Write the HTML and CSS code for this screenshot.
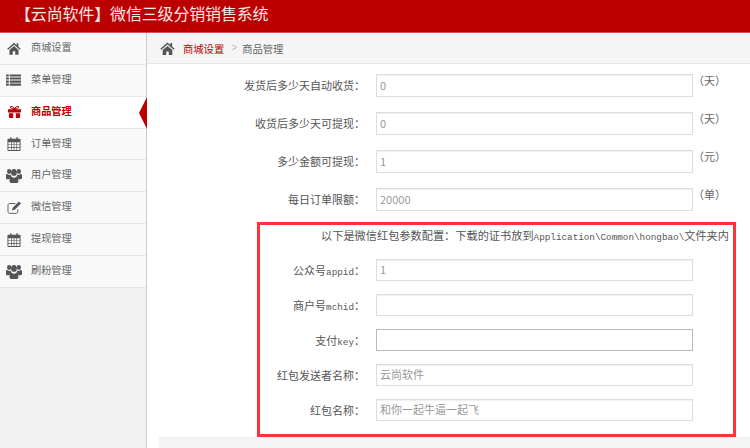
FILE: index.html
```html
<!DOCTYPE html>
<html lang="zh">
<head>
<meta charset="utf-8">
<title>云尚软件</title>
<link rel="stylesheet" href="styles.css">
</head>
<body>
<svg class="defs" width="0" height="0" aria-hidden="true">
  <symbol id="i-home" viewBox="0 0 16 14"><path d="M8 0.5 0.3 7.2l1 1.1L8 2.6l6.7 5.7 1-1.1L13 4.9V1h-2v2.2zM2.8 8.6V14h3.8v-3.8h2.8V14h3.8V8.6L8 4.2z"/></symbol>
  <symbol id="i-list" viewBox="0 0 16 12"><path d="M0 0h3v2.2H0zM4 0h12v2.2H4zM0 3.3h3v2.2H0zM4 3.3h12v2.2H4zM0 6.6h3v2.2H0zM4 6.6h12v2.2H4zM0 9.8h3V12H0zM4 9.8h12V12H4z"/></symbol>
  <symbol id="i-gift" viewBox="0 0 14 13"><path fill-rule="evenodd" d="M0 3.5h5.6V3C4 3 2 2.8 2 1.4 2 .4 3 0 3.8 0 5.2 0 6.3 1.2 7 2.4 7.7 1.2 8.8 0 10.2 0 11 0 12 .4 12 1.4 12 2.8 10 3 8.4 3v.5H14V7H0zM1 7.8h4.6V13H2a1 1 0 0 1-1-1zM8.4 7.8H13V12a1 1 0 0 1-1 1H8.4zM3.8 1.2c-.5 0-.7.2-.7.4 0 .5 1 .7 2.5.7-.5-.6-1.1-1.1-1.8-1.1zM10.2 1.2c-.7 0-1.3.5-1.8 1.1 1.500 0 2.500-.2 2.500-.7 0-.2-.2-.4-.7-.4z"/></symbol>
  <symbol id="i-cal" viewBox="0 0 14 15"><path fill-rule="evenodd" d="M1 2h2V.8C3 .3 3.300 0 3.700 0s.8.300.8.800V2h5V.8c0-.5.3-.8.7-.8s.8.300.8.800V2h2c.6 0 1 .4 1 1v11c0 .6-.4 1-1 1H1c-.6 0-1-.4-1-1V3c0-.6.4-1 1-1zM1 5.500v2.500h2.800V5.500zM4.500 5.500v2.500h2.200V5.500zM7.400 5.500v2.500h2.200V5.500zM10.300 5.500v2.500H13V5.500zM1 8.700v2.300h2.800V8.700zM4.500 8.700v2.300h2.200V8.700zM7.400 8.700v2.300h2.200V8.700zM10.300 8.700v2.300H13V8.700zM1 11.700v2.300h2.800v-2.300zM4.500 11.700v2.300h2.200v-2.300zM7.400 11.700v2.300h2.200v-2.300zM10.300 11.700v2.300H13v-2.300z"/></symbol>
  <symbol id="i-users" viewBox="0 0 16 13" preserveAspectRatio="none"><circle cx="3.100" cy="3" r="2.100"/><circle cx="12.900" cy="3" r="2.100"/><circle cx="8" cy="3.800" r="2.900"/><path d="M0 6.500c0-1 .8-1.300 1.500-1.300.8.800 2 1 3 .5.200.7.600 1.200 1.100 1.600C4.300 7.800 3.500 8.800 3.300 9.700H1c-.6 0-1-.4-1-1zM16 6.500c0-1-.8-1.300-1.500-1.300-.8.800-2 1-3 .5-.2.700-.6 1.200-1.100 1.600 1.300.5 2.100 1.500 2.300 2.400H15c.6 0 1-.4 1-1zM5.500 7.400c.7.700 1.600 1.100 2.500 1.100s1.800-.4 2.500-1.100c1.200.2 1.900 1.100 1.900 2.300v1.700c0 1-.8 1.600-1.800 1.600H5.400c-1 0-1.800-.6-1.800-1.600V9.700c0-1.200.7-2.100 1.900-2.300z"/></symbol>
  <symbol id="i-edit" viewBox="0 0 16 14"><path fill="none" stroke="currentColor" stroke-width="1" d="M11.500 9v2.500c0 1-.7 1.800-1.800 1.800H2.800c-1 0-1.800-.8-1.800-1.800v-7c0-1 .8-1.800 1.800-1.800H9"/><path d="M12.800.5 15 2.700 8.300 9.500l-3 .8.800-3z"/></symbol>
</svg>

<header class="topbar">【云尚软件】微信三级分销销售系统</header>

<div class="layout">
  <nav class="sidebar">
    <a class="nav-item"><svg class="nav-icon"><use href="#i-home"/></svg><span>商城设置</span></a>
    <a class="nav-item"><svg class="nav-icon list"><use href="#i-list"/></svg><span>菜单管理</span></a>
    <a class="nav-item active"><svg class="nav-icon gift"><use href="#i-gift"/></svg><span>商品管理</span></a>
    <a class="nav-item"><svg class="nav-icon cal"><use href="#i-cal"/></svg><span>订单管理</span></a>
    <a class="nav-item"><svg class="nav-icon users"><use href="#i-users"/></svg><span>用户管理</span></a>
    <a class="nav-item"><svg class="nav-icon edit"><use href="#i-edit"/></svg><span>微信管理</span></a>
    <a class="nav-item"><svg class="nav-icon cal"><use href="#i-cal"/></svg><span>提现管理</span></a>
    <a class="nav-item"><svg class="nav-icon users"><use href="#i-users"/></svg><span>刷粉管理</span></a>
  </nav>

  <main class="content">
    <div class="crumbs">
      <svg class="crumb-icon"><use href="#i-home"/></svg>
      <a class="crumb-link">商城设置</a>
      <span class="crumb-sep">&gt;</span>
      <span>商品管理</span>
    </div>

    <form class="form">
      <div class="row"><label>发货后多少天自动收货：</label><input value="0"><span class="unit">（天）</span></div>
      <div class="row"><label>收货后多少天可提现：</label><input value="0"><span class="unit">（天）</span></div>
      <div class="row"><label>多少金额可提现：</label><input value="1"><span class="unit">（元）</span></div>
      <div class="row"><label>每日订单限额：</label><input value="20000"><span class="unit">（单）</span></div>

      <section class="redpack">
        <p class="notice">以下是微信红包参数配置：下载的证书放到<span class="latin">Application\Common\hongbao\</span>文件夹内</p>
        <div class="row2"><label>公众号<span class="latin">appid</span>：</label><input value="1"></div>
        <div class="row2"><label>商户号<span class="latin">mchid</span>：</label><input value=""></div>
        <div class="row2"><label>支付<span class="latin">key</span>：</label><input class="focused" value=""></div>
        <div class="row2"><label>红包发送者名称：</label><input value="云尚软件"></div>
        <div class="row2"><label>红包名称：</label><input value="和你一起牛逼一起飞"></div>
      </section>
    </form>
    <div class="footer-bar"></div>
  </main>
</div>
</body>
</html>
```
FILE: styles.css
```css
* { box-sizing: border-box; }
html, body { margin: 0; height: 448px; overflow: hidden; }
body {
  background: #fff;
  color: #555;
  font-family: "Noto Sans CJK SC", "Liberation Sans", sans-serif;
  font-size: 11px;
}
.defs { position: absolute; }

.topbar {
  height: 33px;
  background: #bb0000;
  border-bottom: 1px solid #d65555;
  color: #f5e6e6;
  font-size: 16px;
  letter-spacing: -0.16px;
  line-height: 27px;
  padding-left: 15px;
  white-space: nowrap;
}

.layout { display: flex; height: 415px; }

.sidebar {
  width: 147px;
  flex: none;
  background: #f2f2f2;
  border-right: 1px solid #ccc;
}
.nav-item {
  position: relative;
  display: flex;
  align-items: center;
  height: 31.860px;
  padding-left: 7px;
  background: #f9f9f9;
  border-bottom: 1px solid #e7e7e7;
  color: #666;
  font-size: 10.200px;
}
.nav-item span { position: absolute; left: 31px; top: 6px; }
.nav-icon { width: 14px; height: 13px; fill: #555; color: #555; }
.nav-icon.list { width: 15px; height: 12px; margin-left: -1px; }
.nav-icon.gift { width: 13px; height: 12px; margin-left: 1px; }
.nav-icon.cal { width: 14px; height: 14px; }
.nav-icon.users { width: 16px; height: 15px; margin-left: -1px; }
.nav-icon.edit { width: 15px; height: 13px; }
.nav-item.active {
  background: #fff;
  color: #b00;
  font-weight: 700;
}
.nav-item.active .nav-icon { fill: #b00; color: #b00; }
.nav-item.active::after {
  content: "";
  position: absolute;
  right: -1px;
  top: 0;
  border-style: solid;
  border-width: 16px 8px 16px 0;
  border-color: transparent #b00 transparent transparent;
}

.content { flex: 1; min-width: 0; position: relative; display: flex; flex-direction: column; }

.crumbs {
  display: flex;
  align-items: center;
  height: 31px;
  padding-left: 13px;
  background: #f5f5f5;
  border-bottom: 1px solid #e6e6e6;
  color: #666;
  font-size: 10.300px;
  flex: none;
}
.crumb-icon { width: 15px; height: 13px; fill: #555; margin-right: 8px; }
.crumb-link { color: #b00; }
.crumb-sep { color: #bbb; margin: 0 5px 0 7px; font-family: "Liberation Mono", monospace; font-size: 10px; }

.form { flex: 1; padding-top: 10px; }

.row {
  display: flex;
  align-items: flex-start;
  height: 23px;
  margin-bottom: 15px;
}
.row label {
  width: 218px;
  text-align: right;
  line-height: 22px;
  flex: none;
  white-space: nowrap;
}
.row input { margin-left: 11px; }
.unit { line-height: 12px; color: #666; white-space: nowrap; }

input {
  width: 317px;
  flex: none;
  height: 23px;
  border: 1px solid #ddd;
  box-shadow: inset 0 1px 1px rgba(0,0,0,.06);
  background: #fff;
  color: #999;
  font-family: "Noto Sans CJK SC", "Liberation Mono", sans-serif;
  font-size: 11px;
  padding: 0 3px 2px;
  outline: none;
  border-radius: 0;
}
.redpack input { margin-left: 11px; height: 22px; }
input.focused { border-color: #b8b8b8; box-shadow: none; }

.redpack {
  width: 479px;
  height: 215px;
  margin: -4px 0 0 110px;
  border: 3px solid #f33;
}
.notice {
  margin: 0 0 14px 61px;
  height: 20px;
  line-height: 20px;
  white-space: nowrap;
  font-size: 11.200px;
}
.latin { font-family: "Liberation Mono", monospace; font-size: 9.300px; }
.row2 { display: flex; height: 22px; margin-bottom: 13px; }
.row2 label { width: 105px; text-align: right; line-height: 22px; flex: none; white-space: nowrap; }

.footer-bar {
  position: absolute;
  left: 12px;
  right: 0;
  top: 404px;
  height: 11px;
  background: #f5f5f5;
  border-top: 1px solid #eee;
}
```
